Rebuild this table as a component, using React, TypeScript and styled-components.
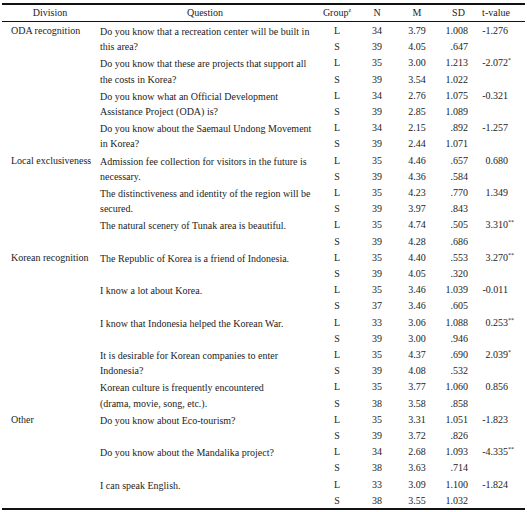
import React from 'react';
import styled, { createGlobalStyle } from 'styled-components';

type Stat = { n: number; m: string; sd: string; t?: string; sig?: string };
type Item = { q: string[]; l: Stat; s: Stat };
type Division = { name: string; items: Item[] };

const data: Division[] = [
  {
    name: 'ODA recognition',
    items: [
      {
        q: ['Do you know that a recreation center will be built in', 'this area?'],
        l: { n: 34, m: '3.79', sd: '1.008', t: '-1.276' },
        s: { n: 39, m: '4.05', sd: '.647' },
      },
      {
        q: ['Do you know that these are projects that support all', 'the costs in Korea?'],
        l: { n: 35, m: '3.00', sd: '1.213', t: '-2.072', sig: '*' },
        s: { n: 39, m: '3.54', sd: '1.022' },
      },
      {
        q: ['Do you know what an Official Development', 'Assistance Project (ODA) is?'],
        l: { n: 34, m: '2.76', sd: '1.075', t: '-0.321' },
        s: { n: 39, m: '2.85', sd: '1.089' },
      },
      {
        q: ['Do you know about the Saemaul Undong Movement', 'in Korea?'],
        l: { n: 34, m: '2.15', sd: '.892', t: '-1.257' },
        s: { n: 39, m: '2.44', sd: '1.071' },
      },
    ],
  },
  {
    name: 'Local exclusiveness',
    items: [
      {
        q: ['Admission fee collection for visitors in the future is', 'necessary.'],
        l: { n: 35, m: '4.46', sd: '.657', t: '0.680' },
        s: { n: 39, m: '4.36', sd: '.584' },
      },
      {
        q: ['The distinctiveness and identity of the region will be', 'secured.'],
        l: { n: 35, m: '4.23', sd: '.770', t: '1.349' },
        s: { n: 39, m: '3.97', sd: '.843' },
      },
      {
        q: ['The natural scenery of Tunak area is beautiful.'],
        l: { n: 35, m: '4.74', sd: '.505', t: '3.310', sig: '**' },
        s: { n: 39, m: '4.28', sd: '.686' },
      },
    ],
  },
  {
    name: 'Korean recognition',
    items: [
      {
        q: ['The Republic of Korea is a friend of Indonesia.'],
        l: { n: 35, m: '4.40', sd: '.553', t: '3.270', sig: '**' },
        s: { n: 39, m: '4.05', sd: '.320' },
      },
      {
        q: ['I know a lot about Korea.'],
        l: { n: 35, m: '3.46', sd: '1.039', t: '-0.011' },
        s: { n: 37, m: '3.46', sd: '.605' },
      },
      {
        q: ['I know that Indonesia helped the Korean War.'],
        l: { n: 33, m: '3.06', sd: '1.088', t: '0.253', sig: '**' },
        s: { n: 39, m: '3.00', sd: '.946' },
      },
      {
        q: ['It is desirable for Korean companies to enter', 'Indonesia?'],
        l: { n: 35, m: '4.37', sd: '.690', t: '2.039', sig: '*' },
        s: { n: 39, m: '4.08', sd: '.532' },
      },
      {
        q: ['Korean culture is frequently encountered', '(drama, movie, song, etc.).'],
        l: { n: 35, m: '3.77', sd: '1.060', t: '0.856' },
        s: { n: 38, m: '3.58', sd: '.858' },
      },
    ],
  },
  {
    name: 'Other',
    items: [
      {
        q: ['Do you know about Eco-tourism?'],
        l: { n: 35, m: '3.31', sd: '1.051', t: '-1.823' },
        s: { n: 39, m: '3.72', sd: '.826' },
      },
      {
        q: ['Do you know about the Mandalika project?'],
        l: { n: 34, m: '2.68', sd: '1.093', t: '-4.335', sig: '**' },
        s: { n: 38, m: '3.63', sd: '.714' },
      },
      {
        q: ['I can speak English.'],
        l: { n: 33, m: '3.09', sd: '1.100', t: '-1.824' },
        s: { n: 38, m: '3.55', sd: '1.032' },
      },
    ],
  },
];

const GlobalStyle = createGlobalStyle`
  html, body {
    margin: 0;
    padding: 0;
    background: #ffffff;
  }
  body {
    font-family: "Liberation Serif", "Times New Roman", serif;
    color: #1c1c1c;
  }
`;

const Page = styled.div`
  width: 527px;
  height: 512px;
  padding: 3px 2px 0 2px;
  box-sizing: border-box;
  overflow: hidden;
`;

const Table = styled.table`
  width: 523px;
  table-layout: fixed;
  border-collapse: collapse;
  font-size: 10px;
  border-top: 2px solid #111;
  border-bottom: 2px solid #111;
`;

const HeadCell = styled.th<{ $pad?: string }>`
  height: 16px;
  padding: ${(p) => p.$pad || '0'};
  font-weight: normal;
  text-align: center;
  line-height: 16px;
  border-bottom: 1px solid #111;
  white-space: nowrap;

  sup {
    font-size: 6px;
    line-height: 0;
  }
`;

const Row = styled.tr`
  height: 16.2px;
`;

const DivisionCell = styled.td`
  vertical-align: top;
  padding: 2px 0 0 9px;
  line-height: 14.2px;
  white-space: nowrap;
`;

const QuestionCell = styled.td`
  vertical-align: top;
  padding: 2px 0 0 2px;
  line-height: 15.2px;
  white-space: nowrap;
`;

const NumCell = styled.td<{ $align?: string; $pad?: string }>`
  padding: ${(p) => p.$pad || '2px 0 0 0'};
  text-align: ${(p) => p.$align || 'center'};
  line-height: 14.2px;
  white-space: nowrap;
`;

const Stars = styled.sup`
  display: inline-block;
  width: 0;
  font-size: 6px;
  line-height: 0;
  vertical-align: 4px;
`;

const StatCells = ({ g, s }: { g: string; s: Stat }) => (
  <>
    <NumCell>{g}</NumCell>
    <NumCell>{s.n}</NumCell>
    <NumCell>{s.m}</NumCell>
    <NumCell $align="right" $pad="2px 7px 0 0">{s.sd}</NumCell>
    <NumCell $align="right" $pad="2px 17px 0 0">
      {s.t}
      {s.sig && <Stars>{s.sig}</Stars>}
    </NumCell>
  </>
);

export default function App() {
  return (
    <Page>
      <GlobalStyle />
      <Table>
        <colgroup>
          <col style={{ width: 96 }} />
          <col style={{ width: 214 }} />
          <col style={{ width: 50 }} />
          <col style={{ width: 30 }} />
          <col style={{ width: 50 }} />
          <col style={{ width: 33 }} />
          <col style={{ width: 50 }} />
        </colgroup>
        <thead>
          <tr>
            <HeadCell>Division</HeadCell>
            <HeadCell>Question</HeadCell>
            <HeadCell>
              Group<sup>z</sup>
            </HeadCell>
            <HeadCell>N</HeadCell>
            <HeadCell>M</HeadCell>
            <HeadCell>SD</HeadCell>
            <HeadCell $pad="0 8px 0 0">t-value</HeadCell>
          </tr>
        </thead>
        <tbody>
          {data.map((d) =>
            d.items.map((it, i) => (
              <React.Fragment key={d.name + i}>
                <Row>
                  {i === 0 && <DivisionCell rowSpan={d.items.length * 2}>{d.name}</DivisionCell>}
                  <QuestionCell rowSpan={2}>
                    {it.q.map((line, k) => (
                      <React.Fragment key={k}>
                        {k > 0 && <br />}
                        {line}
                      </React.Fragment>
                    ))}
                  </QuestionCell>
                  <StatCells g="L" s={it.l} />
                </Row>
                <Row>
                  <StatCells g="S" s={it.s} />
                </Row>
              </React.Fragment>
            ))
          )}
        </tbody>
      </Table>
    </Page>
  );
}
